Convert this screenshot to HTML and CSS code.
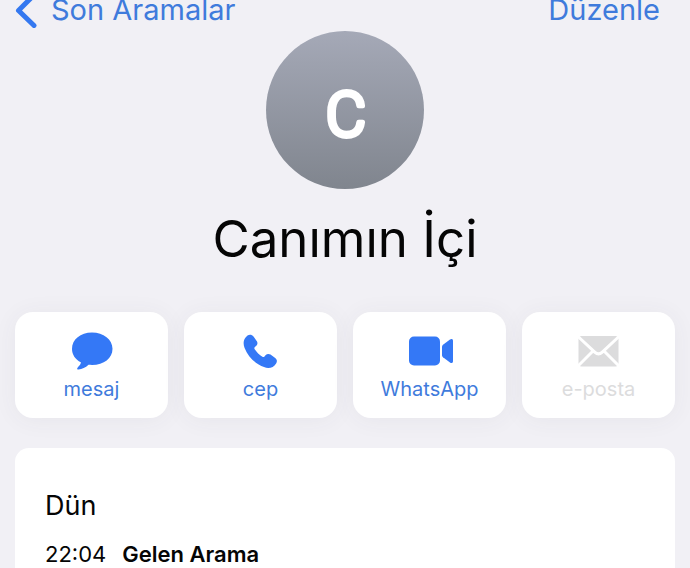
FILE: index.html
```html
<!DOCTYPE html>
<html lang="tr">
<head>
    <meta charset="UTF-8">
    <meta name="viewport" content="width=device-width, initial-scale=1">
    <title>Canımın İçi</title>
    <link rel="stylesheet" href="styles.css">
</head>

<body>
    <nav class="topbar">
        <a class="back" href="#">
            <svg class="chevron" width="24" height="36" viewBox="0 0 24 36" aria-hidden="true">
                <path d="M19 3 L3.500 18.500 L19 33.500" />
            </svg>
            <span>Son Aramalar</span>
        </a>
        <a href="#">Düzenle</a>
    </nav>

    <header class="person">
        <svg class="avatar" viewBox="0 0 158 158">
            <text class="initial" x="80" y="105">C</text>
        </svg>
        <h1 class="name">Canımın İçi</h1>
    </header>

    <main class="content">
        <div class="actions">
            <button class="action" type="button">
                <svg class="icon" width="44" height="40" viewBox="0 0 44 40" aria-hidden="true">
                    <path d="M22 2.500 C33.500 2.500 42.500 9.500 42.500 18.800 C42.500 28.300 34 35 22 35 C20.500 35 19.500 34.800 18.500 34.800 C15.500 37.500 12 39.500 8.500 39.500 C7 39.500 6.800 38.300 7.700 37.400 C9.500 35.700 10.700 34.300 10.900 32.300 C5.200 29.600 2 24.600 2 18.800 C2 9.500 10.500 2.500 22 2.500 Z" />
                </svg>
                <span>mesaj</span>
            </button>
            <button class="action" type="button">
                <svg class="icon" width="44" height="40" viewBox="0 0 44 40" aria-hidden="true">
                    <path d="M8.500 5.500 C10.500 4 13 4.500 14.500 6.500 L17.700 11 C19 12.900 18.500 14.600 17 16 L15.900 17 C15.200 17.700 15.200 18.400 15.700 19.200 C17.500 22 20.500 24.900 23.400 26.700 C24.200 27.200 24.900 27.100 25.500 26.400 L26.500 25.300 C27.900 23.800 29.700 23.400 31.500 24.600 L36.200 27.900 C38.100 29.300 38.400 31.400 37.100 33.400 C34.500 37.600 30 39 25 37.100 C16 33.700 9 26.800 5.600 18 C3.700 13 4.500 8.600 8.500 5.500 Z" />
                </svg>
                <span>cep</span>
            </button>
            <button class="action" type="button">
                <svg class="icon" width="46" height="40" viewBox="0 0 46 40" aria-hidden="true">
                    <rect x="2" y="6.500" width="31" height="29" rx="5" />
                    <path d="M35 17 C35 16 35.300 15.400 36 14.700 L43 9.500 C44.500 8.400 46 9 46 10.700 V31.300 C46 33 44.500 33.600 43 32.500 L36 27.300 C35.300 26.600 35 26 35 25 Z" />
                </svg>
                <span>WhatsApp</span>
            </button>
            <button class="action" type="button" disabled>
                <svg class="icon" width="44" height="40" viewBox="0 0 44 40" aria-hidden="true">
                    <rect x="1.500" y="6" width="40" height="30.500" rx="3" />
                    <path class="fold" d="M1 6.500 L18 22.300 Q21.500 25.500 25 22.300 L42 6.500 M1 36 L15.500 21.500 M42 36 L27.500 21.500" />
                </svg>
                <span>e-posta</span>
            </button>
        </div>

        <section class="calls">
            <h2 class="day">Dün</h2>
            <p class="call"><time>22:04</time> <strong>Gelen Arama</strong></p>
        </section>
    </main>
</body>
</html>
```

FILE: styles.css
```css
* {
    box-sizing: border-box;
}
body {
    display: flex;
    flex-direction: column;
    min-height: 100vh;
    margin: 0;
    background: #f1f0f5;
    color: #050505;
    font-family: Inter, "Liberation Sans", sans-serif;
}
h1, h2, p {
    margin: 0;
    font-weight: 400;
}

/* top bar */
.topbar {
    display: flex;
    justify-content: space-between;
    height: 20px;
    padding: 0 30px 0 15px;
    font-size: 29px;
    line-height: 20px;
}
.topbar a {
    color: #3f7bdc;
    text-decoration: none;
}
.back {
    display: flex;
    align-items: center;
    gap: 12px;
}
.chevron {
    flex: none;
    fill: none;
    stroke: #3478f0;
    stroke-width: 5;
    stroke-linecap: round;
    stroke-linejoin: round;
}

/* avatar and name */
.person {
    display: flex;
    flex-direction: column;
    align-items: center;
    padding-top: 11px;
}
.avatar {
    width: 158px;
    height: 158px;
    border-radius: 50%;
    background: linear-gradient(#a5a9b7, #80858e);
}
.initial {
    fill: #fff;
    stroke: #fff;
    stroke-width: 5;
    stroke-linejoin: round;
    font-family: Roboto, sans-serif;
    font-size: 62px;
    font-weight: 300;
    text-anchor: middle;
}
.name {
    padding: 18px 16px 0;
    font-size: 51px;
    line-height: 64px;
    text-align: center;
}

.content {
    display: flex;
    flex: 1;
    flex-direction: column;
    gap: 30px;
    padding: 41px 15px 0;
}

/* action buttons */
.actions {
    display: grid;
    grid-template-columns: repeat(4, 1fr);
    gap: 16px;
}
.action {
    display: flex;
    flex-direction: column;
    align-items: center;
    gap: 6px;
    padding: 18px 0 16px;
    border: 0;
    border-radius: 18px;
    background: #fff;
    box-shadow: 0 2px 24px rgba(60, 60, 90, 0.06);
    color: #3f7bdc;
    font-family: inherit;
    font-size: 20px;
    line-height: 26px;
    cursor: pointer;
}
.action:disabled {
    color: #dcdcdd;
    cursor: default;
}
.icon {
    fill: #3478f6;
}
.action:disabled .icon {
    fill: #dcdcdd;
}
.icon .fold {
    fill: none;
    stroke: #fff;
    stroke-width: 3;
}

/* call list */
.calls {
    flex: 1;
    padding: 42px 30px 0;
    border-radius: 14px 14px 0 0;
    background: #fff;
}
.day {
    font-size: 27px;
    line-height: 32px;
}
.call {
    display: flex;
    gap: 16px;
    padding-top: 18px;
    font-size: 22px;
    line-height: 28px;
}
.call strong {
    font-weight: 600;
}
```
